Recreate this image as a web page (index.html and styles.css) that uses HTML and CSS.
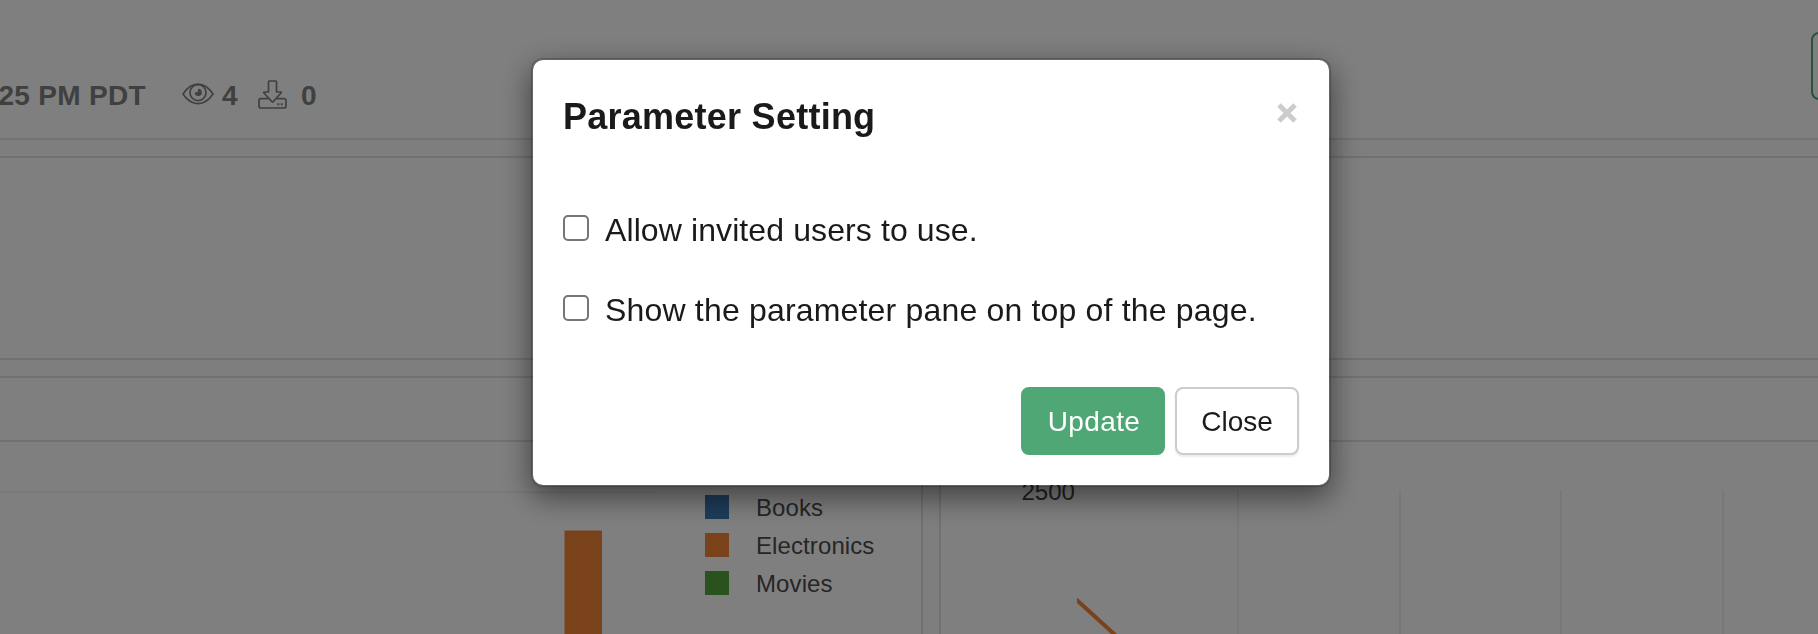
FILE: index.html
```html
<!DOCTYPE html>
<html lang="en">
<head>
<meta charset="utf-8">
<title>Parameter Setting</title>
<link rel="stylesheet" href="styles.css">
</head>
<body>
<div class="page">
  <header class="topbar">
    <span class="date">25 PM PDT</span>
    <svg class="icon-eye" width="32" height="22" viewBox="0 0 32 22" fill="none" stroke="currentColor" stroke-width="1.7">
      <path d="M1 11C5 5 10 1.2 16 1.2S27 5 31 11C27 17 22 20.6 16 20.6S5 17 1 11Z" stroke-linejoin="round"/>
      <circle cx="16" cy="9.6" r="8"/>
      <path d="M16.300 5.800A3.600 3.600 0 1 1 12.600 9.600L15.400 9.200Z" fill="currentColor" stroke="none"/>
    </svg>
    <span class="views">4</span>
    <svg class="icon-download" width="29" height="30" viewBox="0 0 29 30" fill="none" stroke="currentColor" stroke-width="1.7" stroke-linejoin="round">
      <path d="M10.5 1.8Q10.5 1 11.3 1H17.7Q18.5 1 18.5 1.8V12H22.7Q23.8 12 23 13L15.2 21.6Q14.5 22.3 13.8 21.6L6 13Q5.200 12 6.300 12H10.500Z"/>
      <path d="M10.200 18.600H3Q1 18.600 1 20.600V26Q1 28 3 28H26Q28 28 28 26V20.600Q28 18.600 26 18.600H18.800"/>
      <path d="M19.300 24.200h2M22.800 24.200h2" stroke-width="2"/>
    </svg>
    <span class="downloads">0</span>
    <span class="share"></span>
  </header>
  <section class="card pane"></section>
  <div class="columns">
    <section class="card left">
      <div class="card-head"></div>
      <div class="chart">
        <svg class="bars" width="654" height="192" viewBox="0 0 654 192">
          <rect class="grid" x="0" y="49.500" width="654" height="1.500"/>
          <rect class="orange" x="564.500" y="88.500" width="37.500" height="110"/>
        </svg>
        <ul class="legend">
          <li><i class="swatch s-blue"></i>Books</li>
          <li><i class="swatch s-orange"></i>Electronics</li>
          <li><i class="swatch s-green"></i>Movies</li>
        </ul>
      </div>
    </section>
    <section class="card right">
      <div class="card-head"></div>
      <svg class="lines" width="877" height="192" viewBox="941 442 877 192">
        <g class="grid">
          <rect x="1237" y="490" width="2" height="144"/>
          <rect x="1399" y="490" width="2" height="144"/>
          <rect x="1560" y="490" width="2" height="144"/>
          <rect x="1722" y="490" width="2" height="144"/>
        </g>
        <text class="tick" x="1021.500" y="500">2500</text>
        <clipPath id="plot"><rect x="1077" y="490" width="741" height="144"/></clipPath>
        <path class="series" clip-path="url(#plot)" d="M1074 597.500L1124 643"/>
      </svg>
    </section>
  </div>
</div>
<div class="backdrop">
  <div class="modal">
    <div class="modal-head">
      <h1>Parameter Setting</h1>
      <svg class="dismiss" width="20" height="20" viewBox="0 0 20 20"><path d="M2 2L18 18M18 2L2 18"/></svg>
    </div>
    <div class="options">
      <label class="invited"><input type="checkbox"><span>Allow invited users to use.</span></label>
      <label><input type="checkbox"><span>Show the parameter pane on top of the page.</span></label>
    </div>
    <div class="actions">
      <button class="btn primary">Update</button>
      <button class="btn">Close</button>
    </div>
  </div>
</div>
</body>
</html>
```
FILE: styles.css
```css
* { box-sizing: border-box; }
body {
  margin: 0;
  height: 634px;
  overflow: hidden;
  font-family: "Liberation Sans", Arial, sans-serif;
  color: #1a1a1a;
}
.page { width: 1818px; height: 634px; overflow: hidden; background: #fcfcfc; }
.topbar {
  display: flex;
  align-items: flex-start;
  height: 140px;
  background: #fff;
  border-bottom: 2px solid #e6e6e6;
  color: #808080;
  font-size: 28px;
  font-weight: bold;
  line-height: 32px;
  white-space: nowrap;
}
.date { width: 182.500px; margin-left: -1.500px; padding-top: 80px; letter-spacing: 0.300px; }
.icon-eye { margin: 83px 0 0 1px; }
.views { width: 35.500px; margin-left: 8px; padding-top: 80px; }
.icon-download { margin: 80px 0 0 0; }
.downloads { padding: 80px 0 0 14.500px; }
.share {
  flex: none;
  width: 120px;
  height: 68px;
  margin: 32px -113px 0 auto;
  border: 2px solid #4ea774;
  border-radius: 8px;
}
.card { background: #fff; border: 2px solid #e2e2e2; }
.pane { height: 204px; margin: 16px -2px; }
.columns { display: grid; grid-template-columns: 923px 879px; gap: 16px; }
.left, .right { height: 262px; border-bottom: 0; }
.left { border-left: 0; }
.right { border-right: 0; }
.card-head { height: 64px; border-bottom: 2px solid #e2e2e2; }
.chart { display: flex; }
.bars, .lines { display: block; flex: none; }
.grid { fill: #f0f0f0; }
.orange { fill: #f48536; }
.legend { margin: 53px 0 0 50.500px; padding: 0; list-style: none; }
.legend li {
  display: flex;
  align-items: flex-start;
  height: 38px;
  font-size: 24px;
  line-height: 26px;
  letter-spacing: 0.100px;
  color: #4c4c4c;
}
.swatch { width: 24.500px; height: 24px; margin-right: 27px; }
.s-blue { background: #3b78b4; }
.s-orange { background: #f48536; }
.s-green { background: #54a43e; }
.tick { font-size: 24px; fill: #444; }
.series { fill: none; stroke: #f48536; stroke-width: 4; }
.backdrop {
  position: fixed;
  inset: 0;
  display: flex;
  align-items: flex-start;
  padding: 58px 0 0 531px;
  background: rgba(0, 0, 0, 0.5);
}
.modal {
  width: 800px;
  height: 429px;
  padding: 0 30px;
  background: #fff;
  background-clip: padding-box;
  border: 2px solid rgba(0, 0, 0, 0.2);
  border-radius: 12px;
  box-shadow: 0 10px 30px rgba(0, 0, 0, 0.5);
}
.modal-head { display: flex; justify-content: space-between; height: 155px; padding-top: 37px; }
h1 { margin: 0; font-size: 36px; line-height: 40px; letter-spacing: 0.250px; }
.dismiss { margin: 5.500px 2.500px 0 0; fill: none; stroke: #ccc; stroke-width: 5; }
.options { display: flex; flex-direction: column; }
.options label {
  display: flex;
  align-items: flex-start;
  height: 80px;
  font-size: 32px;
  line-height: 36px;
  letter-spacing: 0.180px;
  white-space: nowrap;
}
.options label.invited { letter-spacing: 0.100px; }
.options span { margin-top: -3px; }
.options input {
  appearance: none;
  flex: none;
  width: 26px;
  height: 26px;
  margin: 0 16px 0 0;
  border: 2px solid #767676;
  border-radius: 5px;
  background: #fff;
}
.actions { display: flex; justify-content: flex-end; gap: 10px; padding-top: 12px; }
.btn {
  width: 124px;
  height: 68px;
  padding: 2px 0 0;
  border: 2px solid #ccc;
  border-radius: 8px;
  background: #fff;
  box-shadow: 0 2px 2px rgba(0, 0, 0, 0.08);
  color: #1a1a1a;
  font: 28px "Liberation Sans", Arial, sans-serif;
}
.primary { width: 144px; padding-left: 2px; background: #4ea774; border-color: #4ea774; box-shadow: none; color: #fff; letter-spacing: 0.350px; }
```
